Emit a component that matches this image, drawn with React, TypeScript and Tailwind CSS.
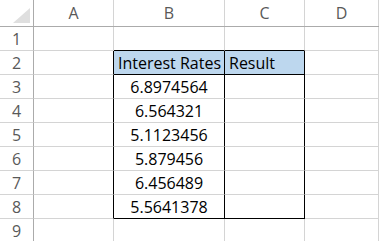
import React from "react";

const cols = [
  { key: "A", w: "w-[80px]" },
  { key: "B", w: "w-[111px]" },
  { key: "C", w: "w-[80px]" },
  { key: "D", w: "flex-1" },
];

const rates = ["6.8974564", "6.564321", "5.1123456", "5.879456", "6.456489", "5.5641378"];

type Cell = { text?: string; align?: string; fill?: boolean; rBlack?: boolean; bBlack?: boolean };

const buildRow = (r: number): Cell[] => {
  const inBox = r >= 2 && r <= 8;
  const a: Cell = { rBlack: inBox };
  const b: Cell = { rBlack: inBox, bBlack: r === 1 || r === 2 || r === 8 };
  const c: Cell = { rBlack: inBox, bBlack: r === 1 || r === 2 || r === 8 };
  const d: Cell = {};
  if (r === 2) {
    b.text = "Interest Rates";
    b.align = "justify-start pl-[4px]";
    b.fill = true;
    c.text = "Result";
    c.align = "justify-start pl-[4px]";
    c.fill = true;
  }
  if (r >= 3 && r <= 8) {
    b.text = rates[r - 3];
    b.align = "justify-center";
  }
  return [a, b, c, d];
};

const App = () => {
  const rows = [1, 2, 3, 4, 5, 6, 7, 8, 9];

  return (
    <div className="w-[379px] h-[241px] overflow-hidden bg-white text-[16px] leading-none font-['Open_Sans',sans-serif]">
      {/* Column headers */}
      <div className="flex h-[27px] border-b border-[#ababab]">
        <div className="relative w-[34px] shrink-0 border-r border-[#ababab]">
          <svg className="absolute left-[13px] top-[8px]" width="17" height="15" viewBox="0 0 17 15">
            <polygon points="17,0 17,15 0,15" fill="#dfdfdf" />
          </svg>
        </div>
        {cols.map((c) => (
          <div
            key={c.key}
            className={`${c.w} shrink-0 flex items-center justify-center border-r border-[#d4d4d4] text-[#595959]`}
          >
            {c.key}
          </div>
        ))}
      </div>

      {/* Rows */}
      {rows.map((r) => (
        <div key={r} className="flex h-[24px]">
          <div className="w-[34px] shrink-0 flex items-center justify-center border-r border-b border-r-[#ababab] border-b-[#d4d4d4] text-[#595959]">
            {r}
          </div>
          {buildRow(r).map((cell, i) => (
            <div
              key={i}
              className={`${cols[i].w} shrink-0 flex items-center border-r border-b text-black ${
                cell.align ?? ""
              } ${cell.fill ? "bg-[#bdd7ee]" : ""} ${cell.rBlack ? "border-r-black" : "border-r-[#d4d4d4]"} ${
                cell.bBlack ? "border-b-black" : "border-b-[#d4d4d4]"
              }`}
            >
              {cell.text}
            </div>
          ))}
        </div>
      ))}
    </div>
  );
};

export default App;
